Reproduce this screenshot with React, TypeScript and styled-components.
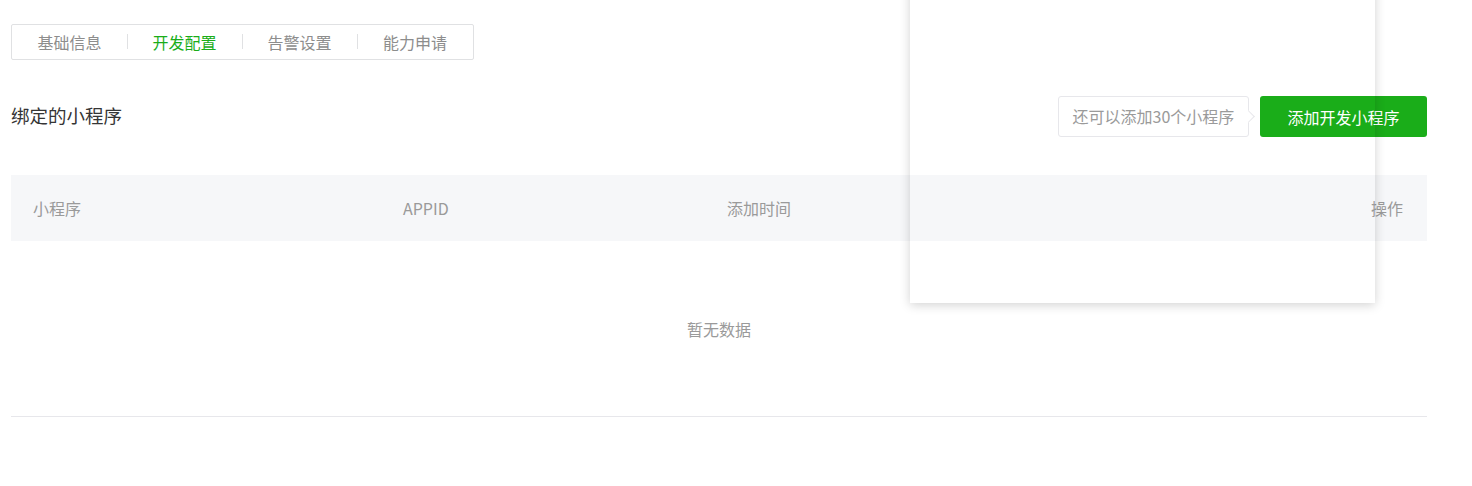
import React, { FC } from 'react'
import styled, { createGlobalStyle } from 'styled-components'

const GlobalStyle = createGlobalStyle`
  html, body {
    margin: 0;
    padding: 0;
    background: #fff;
    font-family: "Noto Sans CJK SC", "Noto Sans", "Liberation Sans", sans-serif;
  }
`

const tabs = ['基础信息', '开发配置', '告警设置', '能力申请']
const columns = ['小程序', 'APPID', '添加时间', '操作']

const App: FC = () => {
  return (
    <Page>
      <GlobalStyle />
      <TabBar>
        {tabs.map((t, i) => (
          <Tab key={t} active={i === 1} first={i === 0}>{t}</Tab>
        ))}
      </TabBar>
      <SectionHead>
        <Title>绑定的小程序</Title>
        <Actions>
          <Tip>还可以添加30个小程序</Tip>
          <PrimaryButton>添加开发小程序</PrimaryButton>
        </Actions>
      </SectionHead>
      <Table>
        <HeadRow>
          {columns.map((c, i) => (
            <HeadCell key={c} last={i === columns.length - 1}>{c}</HeadCell>
          ))}
        </HeadRow>
        <Empty>暂无数据</Empty>
      </Table>
      <Popover />
    </Page>
  )
}

const Page = styled.div`
  position: relative;
  width: 1427px;
  padding: 24px 0 0 11px;
  min-height: 486px;
  box-sizing: border-box;
`
const TabBar = styled.div`
  display: inline-flex;
  border: 1px solid #e0e1e3;
  border-radius: 2px;
  height: 34px;
  align-items: center;
`
const Tab = styled.div<{ active?: boolean; first?: boolean }>`
  position: relative;
  width: 115px;
  text-align: center;
  font-size: 16px;
  color: ${p => (p.active ? '#1aad19' : '#8d8d8d')};
  &:last-child {
    width: 116px;
  }
  &::before {
    content: '';
    display: ${p => (p.first ? 'none' : 'block')};
    position: absolute;
    left: 0;
    top: 50%;
    height: 15px;
    margin-top: -8px;
    border-left: 1px solid #e0e1e3;
  }
`
const SectionHead = styled.div`
  display: flex;
  align-items: center;
  justify-content: space-between;
  margin-top: 36px;
  height: 41px;
`
const Title = styled.h2`
  margin: 0 0 3px;
  font-size: 18.5px;
  font-weight: normal;
  color: #353535;
`
const Actions = styled.div`
  display: flex;
  align-items: center;
  gap: 11px;
`
const Tip = styled.div`
  position: relative;
  width: 191px;
  height: 41px;
  line-height: 39px;
  box-sizing: border-box;
  text-align: center;
  border: 1px solid #e7e7eb;
  border-radius: 3px;
  font-size: 16px;
  color: #9a9a9a;
  background: #fff;
  &::after {
    content: '';
    position: absolute;
    right: -5px;
    top: 50%;
    width: 8px;
    height: 8px;
    margin-top: -5px;
    background: #fff;
    border-top: 1px solid #e7e7eb;
    border-right: 1px solid #e7e7eb;
    transform: rotate(45deg);
  }
`
const PrimaryButton = styled.button`
  width: 167px;
  height: 41px;
  border: 0;
  border-radius: 3px;
  background: #1aad19;
  color: #fff;
  font-family: inherit;
  font-size: 16px;
`
const Table = styled.div`
  margin-top: 38px;
  border-bottom: 1px solid #e7e7eb;
`
const HeadRow = styled.div`
  display: grid;
  grid-template-columns: 370px 324px 1fr auto;
  height: 66px;
  align-items: center;
  background: #f6f7f9;
`
const HeadCell = styled.div<{ last?: boolean }>`
  padding: 0 ${p => (p.last ? '24px' : '22px')} 0 22px;
  font-size: 16px;
  color: #9a9a9a;
  text-align: ${p => (p.last ? 'right' : 'left')};
`
const Empty = styled.div`
  height: 175px;
  display: flex;
  align-items: center;
  justify-content: center;
  font-size: 16px;
  color: #9a9a9a;
`
// floating panel that overlays the page, only its shadow is visible
const Popover = styled.div`
  position: absolute;
  left: 910px;
  top: -20px;
  width: 465px;
  height: 323px;
  box-shadow: 0 2px 10px rgba(0, 0, 0, 0.18);
  pointer-events: none;
`

export default App
